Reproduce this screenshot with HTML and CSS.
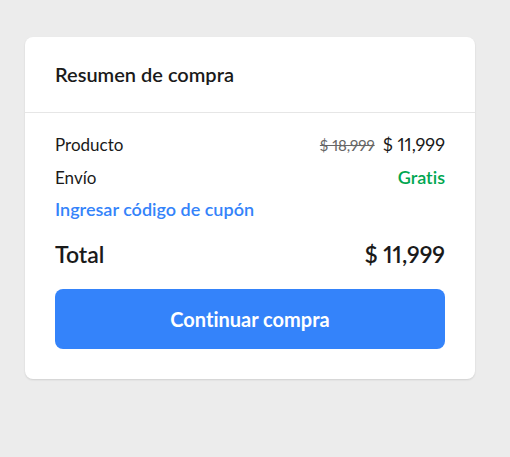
FILE: index.html
```html
<!DOCTYPE html>
<html lang="es">
<head>
  <meta charset="UTF-8">
  <meta name="viewport" content="width=device-width, initial-scale=1.0">
  <title>Resumen de compra</title>
  <link rel="stylesheet" href="styles.css">
</head>
<body>
  <section class="summary">
    <h1 class="summary-title">Resumen de compra</h1>
    <div class="summary-body">
      <div class="row">
        <span>Producto</span>
        <span class="prices"><del>$ 18,999</del> <span class="price">$ 11,999</span></span>
      </div>
      <div class="row">
        <span>Envío</span>
        <span class="free">Gratis</span>
      </div>
      <a class="coupon" href="#">Ingresar código de cupón</a>
      <div class="row total">
        <span>Total</span>
        <span>$ 11,999</span>
      </div>
      <button class="continue" type="button">Continuar compra</button>
    </div>
  </section>
</body>
</html>
```

FILE: styles.css
```css
body {
  margin: 0;
  padding: 37px 35px 37px 25px;
  background-color: #ececec;
  color: #1a1a1a;
  font-family: Lato, sans-serif;
  font-size: 17px;
  font-variant-ligatures: none;
  font-variant-numeric: proportional-nums;
}
.summary {
  background-color: #fff;
  border-radius: 8px;
  box-shadow: 0 1px 2px rgba(0, 0, 0, 0.12);
}
.summary-title {
  margin: 0;
  padding: 0 30px;
  border-bottom: 1px solid #e6e6e6;
  font-size: 20px;
  font-weight: 600;
  line-height: 75px;
}
.summary-body {
  padding: 15px 30px 30px;
}
.row {
  display: flex;
  justify-content: space-between;
  align-items: baseline;
  line-height: 32px;
}
.prices {
  display: flex;
  align-items: baseline;
  gap: 8px;
}
.prices del {
  color: #666;
  font-size: 15px;
}
.price {
  font-size: 18px;
}
.free {
  color: #00a650;
  font-size: 18px;
  font-weight: 600;
}
.coupon {
  display: block;
  color: #3483fa;
  font-size: 18px;
  font-weight: 600;
  line-height: 30px;
  text-decoration: none;
}
.total {
  margin-top: 10px;
  font-size: 23px;
  font-weight: 600;
  line-height: 40px;
}
.continue {
  display: block;
  width: 100%;
  height: 60px;
  margin-top: 15px;
  border: none;
  border-radius: 8px;
  background-color: #3483fa;
  color: #fff;
  font-family: inherit;
  font-size: 20px;
  font-weight: 700;
  font-variant-ligatures: none;
  cursor: pointer;
}
.continue:hover {
  background-color: #2968c8;
}
```
